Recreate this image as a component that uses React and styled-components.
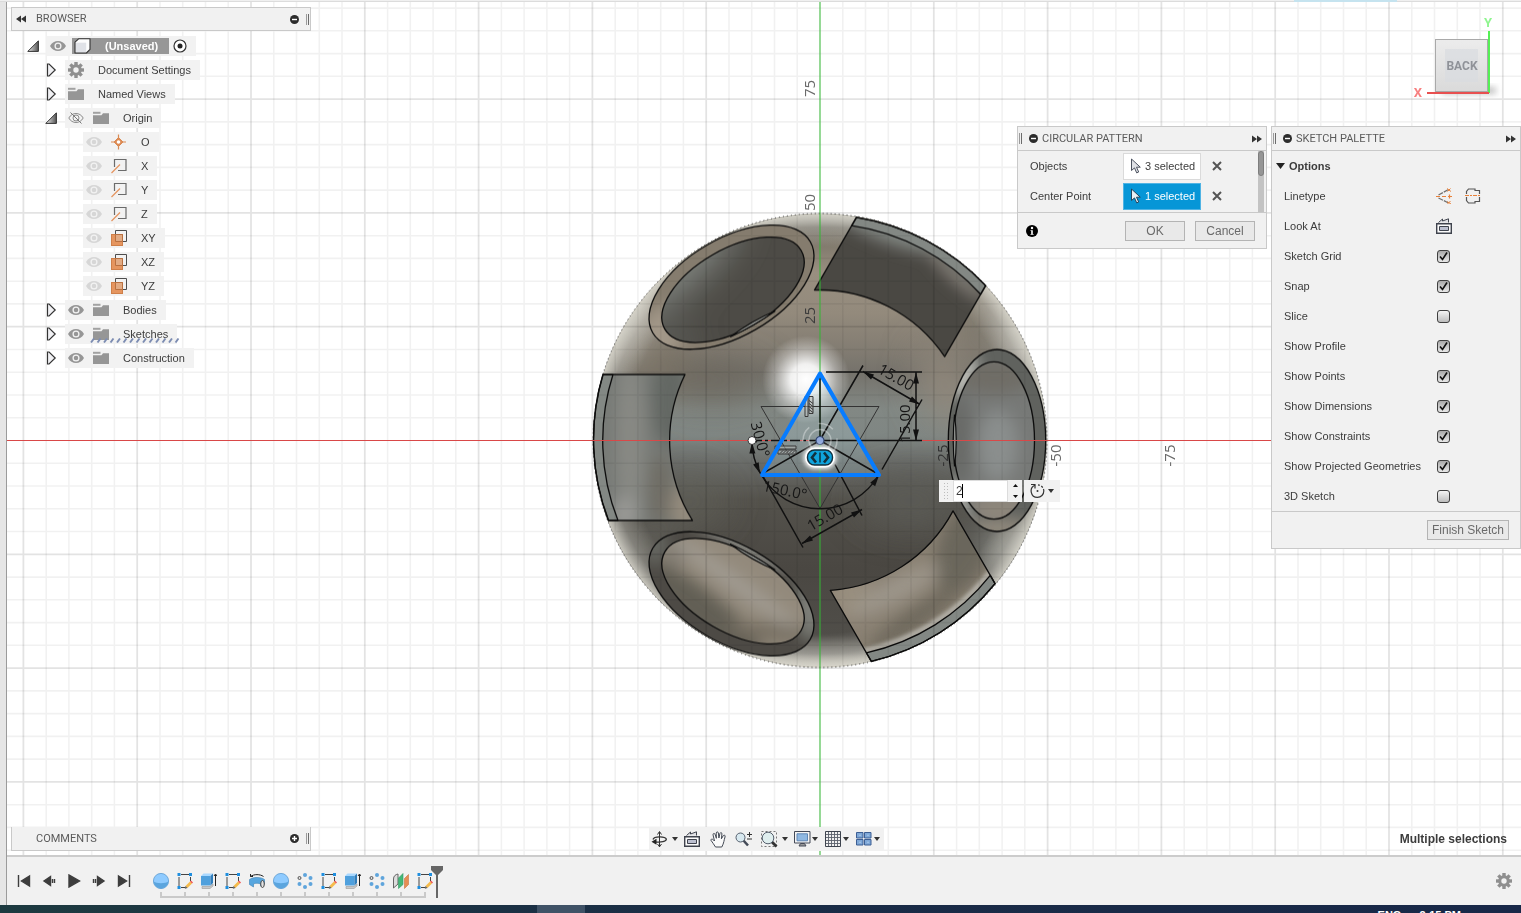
import React, { useState } from "react";
import styled, { createGlobalStyle, css } from "styled-components";

const GlobalStyle = createGlobalStyle`
  * { box-sizing: border-box; }
  body {
    margin: 0;
    font-family: "Liberation Sans", Arial, sans-serif;
    font-size: 11px;
    color: #3c3c3c;
    background: #fff;
  }
  button, input { font-family: inherit; font-size: inherit; color: inherit; }
  svg { display: block; flex: none; }
`;

/* ---------- page frame ---------- */

const Page = styled.div`
  display: flex;
  flex-direction: column;
  height: 100vh;
  overflow: hidden;
`;

const TopStrip = styled.div`
  height: 2px;
  flex: none;
  display: flex;
  justify-content: flex-end;
  padding-right: 124px;
  background: #f0f0f0;
  border-bottom: 1px solid #dcdcdc;
`;

const TopAccent = styled.div`
  width: 103px;
  height: 2px;
  background: #c5e3ef;
`;

const Body = styled.div`
  display: flex;
  flex: 1;
  min-height: 0;
`;

const LeftStrip = styled.div`
  width: 7px;
  flex: none;
  background: #e6e6e6;
  border-right: 1px solid #9b9b9b;
`;

const Main = styled.main`
  flex: 1;
  min-width: 0;
  display: flex;
  flex-direction: column;
`;

const Viewport = styled.section`
  flex: 1;
  min-height: 0;
  display: grid;
  position: relative;
  overflow: hidden;
  background: #fff;
`;

const Scene = styled.svg`
  position: absolute;
  inset: 0;
  width: 100%;
  height: 100%;
`;

const Overlay = styled.div`
  position: relative;
  display: flex;
  flex-direction: column;
  justify-content: space-between;
  padding: 5px 0 4px 4px;
  pointer-events: none;
  & > * { pointer-events: auto; }
`;

const OverlayTop = styled.div`
  display: flex;
  justify-content: space-between;
  align-items: flex-start;
`;

const OverlayBottom = styled.div`
  display: grid;
  grid-template-columns: 1fr auto 1fr;
  align-items: center;
`;

const RightSide = styled.div`
  display: flex;
  flex-direction: column;
  align-items: flex-end;
`;

const PanelRow = styled.div`
  display: flex;
  align-items: flex-start;
  gap: 4px;
`;

/* ---------- panels ---------- */

const Panel = styled.section`
  width: 250px;
  background: #f1f1f1;
  border: 1px solid #c9c9c9;
`;

const PanelHead = styled.header`
  display: flex;
  align-items: center;
  height: 24px;
  padding: 0 4px 0 1px;
  border-bottom: 1px solid #c9c9c9;
`;

const PanelTitle = styled.h2`
  flex: 1;
  margin: 0;
  padding-left: ${(p) => p.$inset || 0}px;
  font: 400 11px/14px Roboto, sans-serif;
  color: #5b5b5b;
`;

const Bar = styled.div`
  display: flex;
  align-items: center;
  width: 300px;
  height: 24px;
  padding: 0 1px 0 4px;
  background: #f1f1f1;
  border: 1px solid #c9c9c9;
  ${(p) => p.$open && css`border-top: 0; padding-left: 24px;`}
`;

const IconButton = styled.button`
  display: grid;
  place-items: center;
  flex: none;
  padding: 0;
  border: 0;
  background: none;
  width: ${(p) => p.$w || 16}px;
  height: ${(p) => p.$h || 16}px;
`;

const Grip = styled.span`
  flex: none;
  width: 3px;
  height: 11px;
  border-left: 1px solid #9a9a9a;
  border-right: 1px solid #6c6c6c;
  margin: 0 ${(p) => p.$after || 0}px 0 ${(p) => p.$before || 0}px;
`;

/* ---------- browser tree ---------- */

const Tree = styled.ul`
  list-style: none;
  margin: 5px 0 0;
  padding: 0 0 0 16px;
`;

const TreeRow = styled.li`
  display: flex;
  align-items: center;
  height: 20px;
  margin-bottom: 4px;
  padding-left: ${(p) => p.$depth * 18}px;
`;

const TwistySlot = styled.span`
  display: flex;
  width: 20px;
  flex: none;
`;

const Chip = styled.div`
  position: relative;
  display: flex;
  align-items: center;
  height: 20px;
  padding: 0 9px 0 3px;
  background: #f2f2f2;
`;

const EyeSlot = styled.span`
  display: flex;
  margin-right: 9px;
`;

const KindSlot = styled.span`
  display: flex;
  margin-right: 14px;
`;

const RootLabel = styled.span`
  display: flex;
  align-items: center;
  height: 16px;
  margin: 0 4px 0 -3px;
  padding: 0 11px 0 2px;
  background: #979797;
  color: #fff;
  font-weight: 700;
`;

const Hatch = styled.svg`
  position: absolute;
  left: 25px;
  bottom: 1px;
`;

/* ---------- forms ---------- */

const FieldRow = styled.div`
  display: flex;
  align-items: center;
  height: 30px;
  padding-left: 12px;
`;

const FieldLabel = styled.label`
  width: ${(p) => p.$w}px;
  flex: none;
`;

const DialogBody = styled.div`
  display: flex;
  justify-content: space-between;
  height: 62px;
  padding-right: 2px;
  border-bottom: 1px solid #c9c9c9;
`;

const ScrollTrack = styled.div`
  width: 6px;
  background: #c3c3c3;
`;

const ScrollThumb = styled.div`
  height: 25px;
  border-radius: 3px;
  border: 1px solid #7e7e7e;
  background: #969696;
`;

const SelectButton = styled.button`
  display: flex;
  align-items: center;
  gap: 4px;
  width: 78px;
  height: 27px;
  padding: 0 0 0 6px;
  border: 1px solid ${(p) => (p.$active ? "#4fb3e4" : "#dadada")};
  background: ${(p) => (p.$active ? "#0696d7" : "#fff")};
  color: ${(p) => (p.$active ? "#fff" : "#3c3c3c")};
  white-space: nowrap;
`;

const DialogFoot = styled.footer`
  display: flex;
  align-items: center;
  gap: 10px;
  height: 35px;
  padding: 0 11px 0 8px;
  justify-content: flex-end;
  & > svg { margin-right: auto; }
`;

const PushButton = styled.button`
  height: 20px;
  min-width: 60px;
  padding: 0 4px;
  border: 1px solid #b4b4b4;
  background: #e9e9e9;
  color: #6a6a6a;
  font-size: 12px;
  line-height: 16px;
`;

const OptionsHead = styled.button`
  display: flex;
  align-items: center;
  gap: 4px;
  height: 30px;
  padding: 0 4px;
  border: 0;
  background: none;
  font-weight: 700;
`;

const CheckWrap = styled.span`
  display: grid;
  place-items: center;
  width: 15px;
  & > * { grid-area: 1 / 1; }
  & > svg { pointer-events: none; }
`;

const Check = styled.input`
  appearance: none;
  width: 13px;
  height: 13px;
  margin: 0;
  border: 1px solid #3f3f3f;
  border-radius: 3px;
  background: ${(p) => (p.checked ? "linear-gradient(#a9a9a9, #e8e8e8)" : "linear-gradient(#f4f4f4, #bdbdbd)")};
`;

const LinetypeIcons = styled.span`
  display: flex;
  gap: 13px;
`;

const PaletteFoot = styled.footer`
  display: flex;
  align-items: center;
  justify-content: flex-end;
  height: 37px;
  padding-right: 11px;
  border-top: 1px solid #c9c9c9;
`;

/* ---------- value editor that floats over the model ---------- */

const ValueEditor = styled.div`
  position: absolute;
  left: calc(50% + 175px);
  top: calc(50% + 51px);
  display: flex;
  gap: 2px;
  height: 22px;
`;

const ValueBox = styled.div`
  display: flex;
  align-items: stretch;
  padding-right: 1px;
  background: #f1f1f1;
`;

const DotGrip = styled.span`
  width: 14px;
  padding: 2px 4px 2px 4px;
  background: radial-gradient(circle, #bdbdbd 1px, transparent 1px) 0 0 / 3px 3px content-box;
  background-clip: content-box;
`;

const ValueField = styled.span`
  position: relative;
  display: flex;
  &::after {
    content: "";
    position: absolute;
    left: 9px;
    top: 4px;
    width: 1px;
    height: 14px;
    background: #000;
  }
`;

const ValueInput = styled.input`
  width: 55px;
  padding: 0 2px;
  border: 1px solid #dcdcdc;
  background: #fff;
  font-size: 12px;
`;

const Spinner = styled.div`
  display: flex;
  flex-direction: column;
  gap: 1px;
  margin-left: 1px;
`;

const ModeButton = styled.button`
  display: flex;
  align-items: center;
  gap: 2px;
  width: 36px;
  padding: 0 0 0 6px;
  border: 0;
  background: #f1f1f1;
`;

/* ---------- bottom ---------- */

const NavBar = styled.div`
  display: flex;
  align-items: center;
  height: 24px;
  padding: 0 4px 0 2px;
  background: #f1f1f1;
`;

const NavButton = styled.button`
  display: flex;
  align-items: center;
  gap: ${(p) => p.$gap || 0}px;
  margin-right: ${(p) => p.$after || 0}px;
  padding: 0;
  border: 0;
  background: none;
`;

const Status = styled.output`
  justify-self: end;
  padding-right: 14px;
  font-size: 12px;
  font-weight: 700;
`;

const Timeline = styled.footer`
  display: flex;
  align-items: center;
  flex: none;
  height: 50px;
  padding: 0 9px;
  background: #f1f1f1;
  border-top: 2px solid #cccccc;
`;

const Playback = styled.div`
  display: flex;
  gap: 9px;
  margin-right: 17px;
`;

const Track = styled.ol`
  display: flex;
  list-style: none;
  margin: 8px 0 0;
  padding: 0;
`;

const Feature = styled.li`
  display: flex;
  flex-direction: column;
  align-items: center;
  width: 24px;
  &::after {
    content: "";
    width: 100%;
    height: 6px;
    margin-top: 3px;
    background:
      linear-gradient(#c9c9c9, #c9c9c9) center top / 2px 100% no-repeat,
      linear-gradient(#c9c9c9, #c9c9c9)
        ${(p) => (p.$edge === "first" ? "right" : "left")} bottom / ${(p) => (p.$edge ? "13px" : "100%")} 2px no-repeat;
  }
`;

const Marker = styled.svg`
  margin: 2px 0 0 -6px;
`;

const Settings = styled(IconButton)`
  margin-left: auto;
`;

const Taskbar = styled.div`
  flex: none;
  display: flex;
  height: 8px;
  overflow: hidden;
  background: linear-gradient(90deg, #1d3a40, #1a2c46 50%, #182848);
  color: #fff;
  font: 700 11px/12px "Liberation Sans", sans-serif;
`;

const TaskSpacer = styled.div`
  flex: ${(p) => p.$grow};
`;

const TaskActive = styled.div`
  width: 48px;
  background: #3f5266;
`;

const Tray = styled.div`
  display: flex;
  gap: 18px;
  padding: 4px 60px 0 0;
`;

/* ---------- icons ---------- */

const DoubleArrow = ({ flip }) => (
  <svg width="11" height="8" viewBox="0 0 11 8" fill="#333">
    <path d={flip ? "M5 0.5v7L0 4zM10 0.5v7L5 4z" : "M1 0.5v7L6 4zM6 0.5v7L11 4z"} />
  </svg>
);

const RoundIcon = ({ plus }) => (
  <svg width="9" height="9" viewBox="0 0 9 9">
    <circle cx="4.5" cy="4.5" r="4.5" fill="#2c2c2c" />
    <path d={plus ? "M2 4.5h5M4.5 2v5" : "M2 4.5h5"} stroke="#fff" strokeWidth="1.4" />
  </svg>
);

const Twisty = ({ open }) =>
  open ? (
    <svg width="12" height="12" viewBox="0 0 12 12">
      <defs>
        <linearGradient id="tw" x1="0" x2="1">
          <stop offset="0" stopColor="#eee" />
          <stop offset="1" stopColor="#555" />
        </linearGradient>
      </defs>
      <path d="M0.8 11.4L11.4 0.8v10.6z" fill="url(#tw)" stroke="#333" />
    </svg>
  ) : (
    <svg width="12" height="14" viewBox="0 0 12 14">
      <path d="M2.5 1v12h1.6L10.2 7 4.1 1z" fill="#f1f1f4" stroke="#333" strokeWidth="1.2" />
    </svg>
  );

const Eye = ({ state = "on" }) => {
  const c = state === "dim" ? "#d6d6d6" : "#969696";
  if (state === "off") {
    return (
      <svg width="16" height="14" viewBox="0 0 16 14" fill="none" stroke="#8c8c8c">
        <path d="M0.8 7C4 1 12 1 15.2 7C12 13 4 13 0.8 7z" />
        <circle cx="8" cy="7" r="3" />
        <path d="M2.5 1.5L13.5 12.5" stroke="#777" />
      </svg>
    );
  }
  return (
    <svg width="16" height="14" viewBox="0 0 16 14">
      <path d="M0 7C3.5 0.4 12.5 0.4 16 7C12.5 13.6 3.5 13.6 0 7z" fill={c} />
      <circle cx="8" cy="7" r="2.9" fill="none" stroke="#f2f2f2" strokeWidth="1.3" />
    </svg>
  );
};

const Gear = ({ color = "#8f8f8f" }) => (
  <svg width="16" height="16" viewBox="-8 -8 16 16" fill={color}>
    {[0, 45, 90, 135].map((a) => (
      <rect key={a} x="-1.7" y="-8" width="3.4" height="16" transform={`rotate(${a})`} />
    ))}
    <circle r="5.8" />
    <circle r="2.7" fill="#f2f2f2" />
  </svg>
);

const Folder = () => (
  <svg width="16" height="14" viewBox="0 0 16 14">
    <path d="M0 4.2h8.500l1.500-2h6V13H0z" fill="#969696" />
    <path d="M0 0.800h7.500v2H0z" fill="#a2a2a2" />
  </svg>
);

const Cube = () => (
  <svg width="17" height="16" viewBox="0 0 17 16" strokeLinejoin="round">
    <path d="M1 4.2L4.6 0.8H16v10.600L12.400 15H1z" fill="#fdfdfd" />
    <path d="M1.500 4.700H12.200V14.700H1.500z" fill="#e0e2e7" />
    <path d="M1 4.2L4.6 0.8H16v10.600L12.400 15H1z" fill="none" stroke="#333" strokeWidth="1.100" />
  </svg>
);

const OriginIcon = () => (
  <svg width="16" height="16" viewBox="0 0 16 16" stroke="#d98a54">
    <path d="M7.500 0.500v15M0 8h15" strokeWidth="1.200" />
    <path d="M7.500 3.500L12 8l-4.500 4.500L3 8z" fill="#dd8b55" />
    <circle cx="7.500" cy="8" r="1.800" fill="#fff" stroke="none" />
  </svg>
);

const AxisIcon = () => (
  <svg width="16" height="16" viewBox="0 0 16 16" fill="none">
    <path d="M3.500 9V1.500H15V12.500H7" stroke="#6b6b6b" strokeWidth="1.200" />
    <path d="M0.500 15L9 6.500" stroke="#e59560" strokeWidth="1.300" />
  </svg>
);

const PlaneIcon = () => (
  <svg width="16" height="16" viewBox="0 0 16 16">
    <path d="M4.500 4V0.500H15.500V11.500H12" fill="none" stroke="#4d4d4d" />
    <rect x="0.500" y="4.500" width="11" height="11" fill="#e5955f" stroke="#cf7f49" />
    <path d="M4.500 4.500h7v7h-7z" fill="#e2ab84" stroke="#b97040" />
  </svg>
);

const Cursor = ({ active }) => (
  <svg width="11" height="16" viewBox="0 0 11 16">
    <path d="M1.500 1v11.500l3-2.600 2.200 5 2-0.900-2.200-4.800h3.800z" fill={active ? "#e9f0f5" : "#dfe1e6"} stroke={active ? "#25455c" : "#4d5360"} />
  </svg>
);

const Cross = () => (
  <svg width="10" height="10" viewBox="0 0 10 10">
    <path d="M1 1l8 8M9 1L1 9" stroke="#555" strokeWidth="2" />
  </svg>
);

const Info = () => (
  <svg width="12" height="12" viewBox="0 0 12 12">
    <circle cx="6" cy="6" r="6" fill="#000" />
    <circle cx="6" cy="3" r="1.200" fill="#fff" />
    <path d="M4.500 5.200H6.800V9H7.600V9.800H4.500V9H5.200V6H4.500z" fill="#fff" />
  </svg>
);

const Caret = () => (
  <svg width="6" height="4" viewBox="0 0 6 4">
    <path d="M0 0h6L3 4z" fill="#333" />
  </svg>
);

const LookAt = () => (
  <svg width="16" height="16" viewBox="0 0 16 16" fill="none" stroke="#3f434d">
    <path d="M0.700 5.700h14.600v9.600H0.700z" fill="#fbfbfb" strokeWidth="1.400" />
    <path d="M3.500 8.500h9v4h-9z" fill="#bcc0d0" />
    <path d="M2.500 4.500L6.500 1V3L12.500 0.800V4.500" fill="#dfe0e4" />
  </svg>
);

const LineConstruct = () => (
  <svg width="16" height="16" viewBox="0 0 16 16" fill="none">
    <path d="M0 8.500h4M6 8.500h4M12 8.500h4M13.500 6.500v4" stroke="#e8813a" strokeWidth="1.200" />
    <path d="M2.500 7L12 1.800M2.500 10L12 14.700" stroke="#6f6f6f" strokeWidth="1.200" strokeDasharray="5 1" />
    <path d="M11 0.500l4 3M14.500 0.500l-3 3M11 13.500l4 2.500M14.500 13l-3 3" stroke="#e8813a" />
  </svg>
);

const LineCenter = () => (
  <svg width="16" height="16" viewBox="0 0 16 16" fill="none">
    <path d="M1.500 6V3.500L3.500 1H10V2.500H14.500V6M1.500 9V12.500L3.500 15H10V13.500H14.500V9" stroke="#555" strokeWidth="1.200" />
    <path d="M0 7.500h16" stroke="#e8813a" strokeWidth="1.200" strokeDasharray="4 1 2 1" />
  </svg>
);

const Orbit = () => (
  <svg width="16" height="16" viewBox="0 0 16 16" fill="none" stroke="#333">
    <path d="M8.500 1v15M6.500 3.500L8.500 0.500l2 3M6.500 13l2 2.800 2-2.800" />
    <path d="M2 8.500C3 5 14 5 15.300 8C15.500 10.500 10 11.500 4 10.800" strokeWidth="1.300" />
    <path d="M0.500 10.800l5-3v6z" fill="#222" stroke="none" />
  </svg>
);

const Hand = () => (
  <svg width="17" height="17" viewBox="0 0 17 17">
    <path
      d="M5.500 16C4 13.500 2.500 11.500 0.900 9.200C1 7.500 2.800 7.800 4.500 10L3 3.800C3 2 4.700 2 5.200 3.600L6.400 7.300L6.200 2C6.600 0.500 8 0.500 8.400 2L8.900 7L10 2.300C10.700 1 12 1.500 11.900 3L11.400 7.800L13.300 4.600C14.500 3.500 15.500 4.500 15 6C14 9 14 12 11.800 16z"
      fill="#fafafa"
      stroke="#444a55"
    />
  </svg>
);

const ZoomIcon = () => (
  <svg width="18" height="16" viewBox="0 0 18 16">
    <path d="M8 9L13 14.500" stroke="#434a57" strokeWidth="2.600" />
    <circle cx="5.500" cy="6.500" r="4.500" fill="#d8e9f0" stroke="#56606e" />
    <path d="M12 3.500h5M14.500 1v5M12 8h5" stroke="#333" />
  </svg>
);

const FitIcon = () => (
  <svg width="17" height="17" viewBox="0 0 17 17">
    <path d="M0.500 0.500h15v15h-15z" fill="none" stroke="#777" strokeDasharray="2 2" />
    <path d="M10.500 10.500L15.500 15.500" stroke="#333" strokeWidth="2.800" />
    <circle cx="7" cy="7" r="5.800" fill="#dfeeee" stroke="#56606e" />
  </svg>
);

const Monitor = () => (
  <svg width="17" height="16" viewBox="0 0 17 16" stroke="#444a58">
    <path d="M0.500 0.500h15.500v11.500H0.500z" fill="#f4f4f4" />
    <path d="M3 2.800h10.500v7H3z" fill="#8fb8e2" stroke="#5e86b5" />
    <path d="M6.500 12.500h4l1.500 2.500h-7z" fill="#999" />
  </svg>
);

const GridIcon = () => (
  <svg width="16" height="16" viewBox="0 0 16 16" fill="none" stroke="#5a606b">
    <path d="M3.500 0v16M6.500 0v16M9.500 0v16M12.500 0v16M0 3.500h16M0 6.500h16M0 9.500h16M0 12.500h16" strokeWidth="0.900" />
    <path d="M0.500 0.500h15v15h-15z" stroke="#3d434e" />
  </svg>
);

const Panes = () => (
  <svg width="16" height="14" viewBox="0 0 16 14" fill="#7fa8d8" stroke="#3d5f94">
    <path d="M0.500 0.500h6.500v5.500H0.500zM8.500 0.500H15v5.500H8.500zM0.500 7.500h6.500v5.500H0.500zM8.500 7.500H15v5.500H8.500z" />
    <path d="M3 2.800h2v1H3zM11 2.800h2v1h-2zM3 9.800h2v1H3zM11 9.800h2v1h-2z" fill="#a9c6e8" stroke="none" />
  </svg>
);

const Rotate = () => (
  <svg width="16" height="16" viewBox="0 0 16 16" fill="none" stroke="#333" strokeWidth="1.200">
    <path d="M1 1.500H5V5.500" />
    <path d="M5 2.200A6.300 6.300 0 0 0 7.500 14.300A6.300 6.300 0 0 0 13.800 8" />
    <path d="M8 1.800A6.300 6.300 0 0 1 13.800 8" strokeDasharray="2 1.500" />
    <circle cx="7.500" cy="8" r="1" fill="#333" stroke="none" />
  </svg>
);

const PLAY = {
  "Go to start": "M1.500 1v12M12.500 2v10L4.500 7z",
  "Step back": "M8.500 2.500v9L2 7z M10.500 5v4M12.500 5v4",
  Play: "M2 1v12L12.500 7z",
  "Step forward": "M5.500 2.500v9L12 7z M1.500 5v4M3.500 5v4",
  "Go to end": "M12.500 1v12M1.500 2v10L9.500 7z",
};

const FeatureIcon = ({ kind }) => {
  switch (kind) {
    case "sphere":
      return (
        <svg width="16" height="16" viewBox="0 0 16 16">
          <circle cx="8" cy="8" r="7.600" fill="#8fcbff" stroke="#5a9bd0" strokeWidth="0.800" />
          <path d="M0.800 8.500C3 10.800 13 10.800 15.200 8.500C15 17.500 1 17.500 0.800 8.500z" fill="#5ba5de" />
        </svg>
      );
    case "sketch":
      return (
        <svg width="16" height="16" viewBox="0 0 16 16">
          <path d="M2 4v9M13.500 4v4M4 1.500h8M4 14.500h4" stroke="#444" fill="none" />
          <path d="M0.500 0h3v3h-3zM12 0h3v3h-3zM0.500 13h3v3h-3z" fill="#1f8fe0" />
          <path d="M8.500 13L13 8.500l2 2-4.500 4.500z" fill="#f5bb4b" />
          <path d="M13 8.500l1-1 2 2-1 1z" fill="#f14f4f" />
          <path d="M8.500 13l2 2-2.700 0.700z" fill="#555" />
        </svg>
      );
    case "extrude":
      return (
        <svg width="16" height="16" viewBox="0 0 16 16">
          <path d="M1 13.500h8l3-2.500v2l-3 2.500H1z" fill="#c9c9c9" stroke="#999" strokeWidth="0.600" />
          <path d="M0 3L2.500 0.500h9.500L9.500 3z" fill="#a9d8ff" />
          <path d="M0 3h9.500v9.500H0z" fill="#4fa0dd" />
          <path d="M9.500 3L12 0.500v9.500L9.500 12.500z" fill="#2f7dbb" />
          <path d="M14.500 13V1.500M13 3L14.500 1l1.500 2" stroke="#222" fill="none" />
        </svg>
      );
    case "revolve":
      return (
        <svg width="16" height="16" viewBox="0 0 16 16">
          <path d="M1.500 3.500C5 1 11 1 14.500 3.500M1.500 1v2.500H4" stroke="#222" fill="none" />
          <path d="M0.500 6.500C4 3.800 12 3.800 15.500 6.500V11L11.500 13V11C10 10 6 10 4.500 11V14L0.500 11.500z" fill="#57a6df" stroke="#3a81b5" strokeWidth="0.600" />
          <ellipse cx="13.500" cy="11" rx="1.800" ry="3.500" fill="#e3e3e3" stroke="#444" />
        </svg>
      );
    case "pattern":
      return (
        <svg width="16" height="16" viewBox="0 0 16 16" fill="#5fa5dc">
          <circle cx="8" cy="2" r="2" />
          <circle cx="13.500" cy="5" r="2" />
          <circle cx="13.500" cy="11" r="2" />
          <circle cx="8" cy="14" r="2" />
          <circle cx="2.500" cy="11" r="2" />
          <circle cx="2.500" cy="5" r="1.500" fill="#ddd" stroke="#555" />
        </svg>
      );
    default:
      return (
        <svg width="16" height="16" viewBox="0 0 16 16">
          <path d="M0.500 15V6C0.500 3 2.500 1.500 5 1v10z" fill="#ddd" stroke="#666" />
          <path d="M5.500 5L10 0.500v11L5.500 15.500z" fill="#43b878" stroke="#339962" strokeWidth="0.600" />
          <path d="M11.500 5.500L15.500 1.500v10l-4 4z" fill="#e68d55" stroke="#c9743e" strokeWidth="0.600" />
        </svg>
      );
  }
};

/* ---------- model scene ---------- */

const SLOT = "M-217 -66L-135 -66A150.500 150.500 0 0 0 -127.500 80L-211.500 80A227 227 0 0 1 -217 -66Z";
const SLOT_RIM = "M-217 -66L-207 -66A217 217 0 0 0 -202 80L-211.500 80A227 227 0 0 1 -217 -66Z";
const STEP = 22.76;

const gridPath = (major) => {
  let d = "";
  for (let i = -60; i <= 60; i++) {
    if (i === 0 || (i % 5 === 0) !== major) continue;
    const p = (i * STEP).toFixed(1);
    d += `M${p} -900V900M-1500 ${p}H1500`;
  }
  return d;
};

const Blob = ({ x, y, rx, ry = rx, c, o = 1, a = 0 }) => (
  <ellipse rx={rx} ry={ry} fill={c} opacity={o} transform={`translate(${x} ${y}) rotate(${a})`} />
);

const Dim = ({ x, y, a, children, c = "#161616" }) => (
  <text transform={`translate(${x} ${y}) rotate(${a})`} textAnchor="middle" dy="5" fontSize="15" fill={c} fontFamily="'Open Sans', sans-serif">
    {children}
  </text>
);

const Arrow = ({ x, y, a }) => <path d="M0 0L-11 -3V3z" fill="#111" stroke="none" transform={`translate(${x} ${y}) rotate(${a})`} />;

const Hole = ({ id, a, ring, children }) => (
  <g>
    <clipPath id={`${id}r`}>
      <ellipse cx="177" rx="48.700" ry="91" transform={`rotate(${a})`} />
    </clipPath>
    <clipPath id={`${id}h`}>
      <ellipse cx="174" rx="40.500" ry="78.700" transform={`rotate(${a})`} />
    </clipPath>
    <g clipPath={`url(#${id}r)`}>{ring}</g>
    <g clipPath={`url(#${id}h)`}>{children}</g>
    <g transform={`rotate(${a})`} fill="none" stroke="#0c0c0c" strokeWidth="1.300">
      <ellipse cx="177" rx="48.700" ry="91" />
      <ellipse cx="174" rx="40.500" ry="78.700" />
      <path d="M134.500 -26Q138 0 134.500 26Q132 0 134.500 -26Z" fill="#8c8e8a" strokeWidth="1.100" />
    </g>
  </g>
);

const Slot = ({ id, a, children }) => (
  <g>
    <clipPath id={id}>
      <path d={SLOT} transform={`rotate(${a})`} />
    </clipPath>
    <g clipPath={`url(#${id})`}>{children}</g>
    <g transform={`rotate(${a})`} stroke="#0c0c0c" strokeWidth="1.300" strokeLinejoin="round">
      <path d={SLOT_RIM} fill="#838884" />
      <path d={SLOT} fill="none" />
    </g>
  </g>
);

const ModelScene = () => (
  <Scene viewBox="7 2 1514 853" preserveAspectRatio="xMidYMid slice" role="img" aria-label="Sketch on a spherical body">
    <defs>
      <linearGradient id="base" gradientUnits="userSpaceOnUse" x1="0" x2="0" y1="-227" y2="227">
        <stop offset="0" stopColor="#a3a29a" />
        <stop offset="0.030" stopColor="#77736a" />
        <stop offset="0.070" stopColor="#817a6d" />
        <stop offset="0.130" stopColor="#998f80" />
        <stop offset="0.220" stopColor="#938a7c" />
        <stop offset="0.300" stopColor="#827c72" />
        <stop offset="0.350" stopColor="#75726b" />
        <stop offset="0.430" stopColor="#828884" />
        <stop offset="0.490" stopColor="#7f8683" />
        <stop offset="0.550" stopColor="#6a6c69" />
        <stop offset="0.630" stopColor="#54524c" />
        <stop offset="0.780" stopColor="#4a4742" />
        <stop offset="0.930" stopColor="#504e49" />
        <stop offset="0.970" stopColor="#7c7a74" />
        <stop offset="1" stopColor="#cdc9bc" />
      </linearGradient>
      <radialGradient id="rim" gradientUnits="userSpaceOnUse" cx="0" cy="0" r="227">
        <stop offset="0.850" stopColor="#d4d3ca" stopOpacity="0" />
        <stop offset="0.940" stopColor="#d0cfc7" stopOpacity="0.350" />
        <stop offset="1" stopColor="#d8d6cc" stopOpacity="0.900" />
      </radialGradient>
      <radialGradient id="shine">
        <stop offset="0" stopColor="#fff" />
        <stop offset="0.350" stopColor="#fff" stopOpacity="0.900" />
        <stop offset="0.700" stopColor="#fff" stopOpacity="0.350" />
        <stop offset="1" stopColor="#fff" stopOpacity="0" />
      </radialGradient>
      <filter id="b8" x="-50%" y="-50%" width="200%" height="200%">
        <feGaussianBlur stdDeviation="8" />
      </filter>
      <filter id="b18" x="-60%" y="-60%" width="220%" height="220%">
        <feGaussianBlur stdDeviation="18" />
      </filter>
      <filter id="b2" x="-50%" y="-50%" width="200%" height="200%">
        <feGaussianBlur stdDeviation="2" />
      </filter>
      <clipPath id="ball">
        <circle r="227" />
      </clipPath>
    </defs>

    <g transform="translate(820 440.500)">
      <g clipPath="url(#ball)">
        <circle r="227" fill="url(#base)" />
        <g filter="url(#b18)">
          <Blob x={-165} y={-75} rx={35} ry={30} c="#7d7465" o={0.8} />
          <Blob x={-105} y={-60} rx={50} ry={22} c="#6a665c" o={0.8} />
          <Blob x={-130} y={60} rx={40} ry={30} c="#63625c" o={0.6} />
          <Blob x={-175} y={105} rx={25} ry={22} c="#66655f" />
          <Blob x={125} y={-55} rx={24} ry={42} c="#91887b" a={-20} />
          <Blob x={165} y={-115} rx={18} ry={36} c="#756f65" a={-30} />
          <Blob x={178} y={110} rx={30} ry={26} c="#787a76" />
          <Blob x={90} y={60} rx={50} ry={26} c="#5b5b57" />
          <Blob x={-196} y={-125} rx={16} ry={44} c="#d0cfc8" a={30} />
          <Blob x={208} y={-100} rx={12} ry={44} c="#d0cfc8" a={-28} />
          <Blob x={205} y={100} rx={12} ry={34} c="#bdbcb2" a={28} />
        </g>
        <circle r="227" fill="url(#rim)" />
        <circle cx="-14" cy="-61" r="44" fill="url(#shine)" />
      </g>
      <circle r="227" fill="none" stroke="#222" strokeDasharray="1 3" strokeWidth="1" />

      <Hole
        id="tl"
        a={240}
        ring={
          <g>
            <rect x="-180" y="-220" width="190" height="140" fill="#857c6e" />
            <g filter="url(#b8)">
              <Blob x={-160} y={-105} rx={22} ry={35} c="#a29788" a={30} />
              <Blob x={-60} y={-80} rx={50} ry={14} c="#8e8a82" a={-30} />
            </g>
          </g>
        }
      >
        <rect x="-180" y="-220" width="190" height="140" fill="#4d4b46" />
        <g filter="url(#b18)">
          <Blob x={-140} y={-175} rx={75} ry={22} c="#858a85" a={-42} />
          <Blob x={-150} y={-95} rx={20} ry={20} c="#5f605b" />
        </g>
      </Hole>

      <Hole
        id="bl"
        a={120}
        ring={
          <g>
            <rect x="-180" y="80" width="190" height="140" fill="#4d4a45" />
            <g filter="url(#b8)">
              <Blob x={-80} y={96} rx={80} ry={10} c="#a0a19b" a={28} />
              <Blob x={-10} y={165} rx={12} ry={36} c="#83857f" />
              <Blob x={-165} y={105} rx={12} ry={20} c="#686964" />
            </g>
          </g>
        }
      >
        <rect x="-180" y="80" width="190" height="140" fill="#938a7c" />
        <g filter="url(#b8)">
          <Blob x={-122} y={168} rx={80} ry={20} c="#625e54" a={38} />
          <Blob x={-145} y={110} rx={12} ry={16} c="#827d73" />
          <Blob x={-85} y={142} rx={80} ry={7} c="#a39e95" a={36} />
          <Blob x={-45} y={192} rx={50} ry={8} c="#746d60" a={5} />
        </g>
      </Hole>

      <Hole
        id="rt"
        a={0}
        ring={
          <g>
            <rect x="120" y="-95" width="110" height="190" fill="#60625e" />
            <g filter="url(#b8)">
              <Blob x={142} y={-65} rx={14} ry={24} c="#bdbdb7" a={20} />
              <Blob x={178} y={88} rx={36} ry={10} c="#958d80" />
              <Blob x={138} y={62} rx={10} ry={26} c="#b7b8b3" />
            </g>
          </g>
        }
      >
        <rect x="120" y="-95" width="110" height="190" fill="#777977" />
        <g filter="url(#b8)">
          <Blob x={175} y={-65} rx={40} ry={18} c="#6f6d66" />
          <Blob x={178} y={5} rx={20} ry={36} c="#8a8e8d" />
          <Blob x={140} y={0} rx={10} ry={50} c="#666865" />
          <Blob x={180} y={68} rx={30} ry={18} c="#8d867b" />
        </g>
      </Hole>

      <Slot id="sl" a={0}>
        <rect x="-230" y="-70" width="110" height="155" fill="#777a76" />
        <g filter="url(#b8)">
          <Blob x={-190} y={0} rx={14} ry={90} c="#888984" />
          <Blob x={-150} y={-40} rx={18} ry={46} c="#646763" />
          <Blob x={-160} y={50} rx={12} ry={36} c="#706d65" />
          <Blob x={-135} y={68} rx={14} ry={26} c="#958c7e" />
          <Blob x={-195} y={75} rx={14} ry={20} c="#999995" />
        </g>
      </Slot>

      <Slot id="su" a={120}>
        <rect x="-10" y="-230" width="190" height="150" fill="#4a4843" />
        <g filter="url(#b8)">
          <Blob x={70} y={-211} rx={60} ry={13} c="#858a86" a={20} />
          <Blob x={138} y={-166} rx={40} ry={8} c="#85817a" a={42} />
        </g>
      </Slot>

      <Slot id="sd" a={240}>
        <rect x="0" y="60" width="190" height="170" fill="#8a8173" />
        <g filter="url(#b8)">
          <Blob x={145} y={105} rx={26} ry={50} c="#6b665b" a={20} />
          <Blob x={30} y={150} rx={20} ry={30} c="#978d7e" />
          <Blob x={75} y={150} rx={50} ry={12} c="#9c958a" a={-28} />
          <Blob x={95} y={178} rx={60} ry={10} c="#6d675b" a={-35} />
        </g>
        <circle r="215" fill="none" stroke="#d2d2cd" strokeWidth="4" filter="url(#b2)" opacity="0.800" />
      </Slot>

      <path d={gridPath(false)} stroke="#000" strokeOpacity="0.055" strokeWidth="1.600" />
      <path d={gridPath(true)} stroke="#000" strokeOpacity="0.110" strokeWidth="1.800" />
      <path d="M-813 0H452" stroke="#d94848" strokeWidth="1.200" />
      <path d="M0 -439V415" stroke="#35b535" strokeOpacity="0.800" strokeWidth="1.300" />

      <g>
        <Dim x={-10} y={-352} a={-90} c="#6a6a6a">75</Dim>
        <Dim x={-10} y={-238} a={-90} c="#6a6a6a">50</Dim>
        <Dim x={-10} y={-125} a={-90} c="#3c3c3c">25</Dim>
        <Dim x={123} y={15} a={-90} c="#333">-25</Dim>
        <Dim x={236} y={15} a={-90} c="#6a6a6a">-50</Dim>
        <Dim x={350} y={15} a={-90} c="#6a6a6a">-75</Dim>
      </g>

      <path d="M0 -67L59 35H-58Z" fill="#bcdfea" fillOpacity="0.220" />
      <g fill="none" stroke="#111" strokeWidth="1.500">
        <path d="M-59 -34H59L0 68Z" stroke="#333" strokeWidth="1" />
        <path d="M0 0V-64M0 0L59 34M0 0L-59 34" />
        <path d="M6 -68.500H102M0 0H102M96 -68V0M43 -75L2 -4M102 -41L62 29M43 -69L100 -36" />
        <path d="M-58 34L-17 107M15 24L42 75M-18 103L42 69" />
        <path d="M-68 0A68 68 0 0 0 -59 34A68 68 0 0 0 59 34" />
        <path d="M-68 0H0" strokeDasharray="10 3 3 3" />
        <Arrow x={96} y={-68} a={-90} />
        <Arrow x={96} y={0} a={90} />
        <Arrow x={43} y={-69} a={210} />
        <Arrow x={100} y={-36} a={30} />
        <Arrow x={-18} y={103} a={150} />
        <Arrow x={42} y={69} a={-30} />
        <Arrow x={-68} y={2} a={-92} />
        <Arrow x={-60} y={33} a={68} />
        <Arrow x={59} y={35} a={-55} />
      </g>
      <Dim x={76} y={-63} a={30}>15.00</Dim>
      <Dim x={85} y={-17} a={-90}>15.00</Dim>
      <Dim x={5} y={77} a={-30}>15.00</Dim>
      <Dim x={-60} y={-1} a={75}>30.0°</Dim>
      <Dim x={-35} y={50} a={12}>150.0°</Dim>
      <g fill="none" stroke="#fff" strokeOpacity="0.350" strokeWidth="1.500">
        <circle r="11" />
        <circle r="17" strokeDasharray="16 10" />
      </g>
      <g fill="#b9bcba" fillOpacity="0.500" stroke="#3a3a3a">
        <path d="M-45 5.500H-24V8.500H-45Z" />
        <path d="M-42 9.500H-24V13.500H-42ZM-40 13l3 -3m0 3l3 -3m0 3l3 -3m0 3l3 -3m0 3l3 -3" />
        <path d="M-15 -44H-12V-24H-15Z" />
        <path d="M-11 -44H-7V-27H-11ZM-11 -40l4 3m-4 0l4 3m-4 0l4 3m-4 0l4 3" />
      </g>
      <path d="M0 -67L59 34.500H-58Z" fill="none" stroke="#077cff" strokeWidth="4" strokeLinejoin="round" />
      <circle cx="-68" r="4" fill="#fff" stroke="#333" />
      <circle r="4" fill="#8fa8dc" stroke="#30436d" strokeWidth="1.200" />
      <rect x="-15" y="7" width="30" height="20" rx="10" fill="#fff" stroke="#fff" strokeWidth="3" opacity="0.900" filter="url(#b2)" />
      <rect x="-15" y="7" width="30" height="20" rx="10" fill="#fff" />
      <rect x="-12.500" y="9.500" width="25" height="15" rx="7" fill="#0fa3dc" stroke="#12303e" strokeWidth="1.400" />
      <path d="M-4 12L-8 17l4 5M4 12l4 5-4 5" fill="none" stroke="#12303e" strokeWidth="2.600" />
      <path d="M0 12v10" stroke="#12303e" strokeWidth="1.500" />
    </g>
  </Scene>
);

const ViewCube = () => (
  <svg width="111" height="119" viewBox="1410 7 111 119" role="img" aria-label="View cube: back">
    <defs>
      <linearGradient id="vc" x1="0" x2="0" y1="0" y2="1">
        <stop offset="0" stopColor="#ececec" />
        <stop offset="1" stopColor="#dadada" />
      </linearGradient>
      <filter id="vs" x="-20%" y="-50%" width="140%" height="200%">
        <feGaussianBlur stdDeviation="3" />
      </filter>
    </defs>
    <rect x="1442" y="87" width="54" height="7" fill="#777" opacity="0.450" filter="url(#vs)" />
    <rect x="1435.500" y="39.500" width="52" height="52" fill="url(#vc)" stroke="#a9a9a9" />
    <rect x="1445" y="49" width="33" height="33" fill="#d9dbdf" opacity="0.700" />
    <text x="1462" y="70" textAnchor="middle" fontFamily="Roboto, sans-serif" fontWeight="700" fontSize="12" fill="#8f9298">
      BACK
    </text>
    <path d="M1489 31V93" stroke="#55f055" strokeWidth="2" />
    <path d="M1427 93H1489" stroke="#e85050" strokeWidth="2" />
    <g fontFamily="Roboto, sans-serif" fontWeight="700" fontSize="13" textAnchor="middle">
      <text x="1488" y="27" fill="#90f590">Y</text>
      <text x="1418" y="97" fill="#f78080">X</text>
    </g>
  </svg>
);

/* ---------- data ---------- */

const TREE = [
  { depth: 1, open: false, kind: "gear", label: "Document Settings" },
  { depth: 1, open: false, kind: "folder", label: "Named Views" },
  { depth: 1, open: true, eye: "off", kind: "folder", label: "Origin" },
  { depth: 2, eye: "dim", kind: "origin", label: "O" },
  { depth: 2, eye: "dim", kind: "axis", label: "X" },
  { depth: 2, eye: "dim", kind: "axis", label: "Y" },
  { depth: 2, eye: "dim", kind: "axis", label: "Z" },
  { depth: 2, eye: "dim", kind: "plane", label: "XY" },
  { depth: 2, eye: "dim", kind: "plane", label: "XZ" },
  { depth: 2, eye: "dim", kind: "plane", label: "YZ" },
  { depth: 1, open: false, eye: "on", kind: "folder", label: "Bodies" },
  { depth: 1, open: false, eye: "on", kind: "folder", label: "Sketches", hatch: true },
  { depth: 1, open: false, eye: "on", kind: "folder", label: "Construction" },
];

const KINDS = { gear: Gear, folder: Folder, origin: OriginIcon, axis: AxisIcon, plane: PlaneIcon };

const OPTIONS = [
  ["Sketch Grid", true],
  ["Snap", true],
  ["Slice", false],
  ["Show Profile", true],
  ["Show Points", true],
  ["Show Dimensions", true],
  ["Show Constraints", true],
  ["Show Projected Geometries", true],
  ["3D Sketch", false],
];

const FEATURES = ["sphere", "sketch", "extrude", "sketch", "revolve", "sphere", "pattern", "sketch", "extrude", "pattern", "mirror", "sketch"];

/* ---------- sections ---------- */

const Browser = () => (
  <nav aria-label="Browser">
    <Bar>
      <IconButton aria-label="Collapse browser" $w={11}><DoubleArrow flip /></IconButton>
      <PanelTitle $inset={9}>BROWSER</PanelTitle>
      <IconButton aria-label="Minimize"><RoundIcon /></IconButton>
      <Grip $before={4} />
    </Bar>
    <Tree>
      <TreeRow $depth={0}>
        <TwistySlot><Twisty open /></TwistySlot>
        <Chip>
          <EyeSlot><Eye /></EyeSlot>
          <RootLabel>
            <KindSlot><Cube /></KindSlot>
            (Unsaved)
          </RootLabel>
          <svg width="14" height="14" viewBox="0 0 14 14">
            <circle cx="7" cy="7" r="6" fill="#fff" stroke="#333" strokeWidth="1.200" />
            <circle cx="7" cy="7" r="2.500" fill="#222" />
          </svg>
        </Chip>
      </TreeRow>
      {TREE.map((n) => {
        const Kind = KINDS[n.kind];
        return (
          <TreeRow key={n.label} $depth={n.depth}>
            <TwistySlot>{n.open !== undefined && <Twisty open={n.open} />}</TwistySlot>
            <Chip>
              {n.eye && <EyeSlot><Eye state={n.eye} /></EyeSlot>}
              <KindSlot><Kind /></KindSlot>
              {n.label}
              {n.hatch && (
                <Hatch width="90" height="5" viewBox="0 0 90 5">
                  {Array.from({ length: 14 }, (_, i) => (
                    <path key={i} d={`M${i * 6.5 + 1} 4.500l3-4`} stroke="#7c8cb2" strokeWidth="1.900" />
                  ))}
                </Hatch>
              )}
            </Chip>
          </TreeRow>
        );
      })}
    </Tree>
  </nav>
);

const CircularPattern = () => (
  <Panel>
    <PanelHead>
      <Grip $after={7} />
      <IconButton aria-label="Minimize" $w={9}><RoundIcon /></IconButton>
      <PanelTitle $inset={4}>CIRCULAR PATTERN</PanelTitle>
      <IconButton aria-label="Expand" $w={11}><DoubleArrow /></IconButton>
    </PanelHead>
    <DialogBody>
      <div>
        <FieldRow>
          <FieldLabel htmlFor="objects" $w={93}>Objects</FieldLabel>
          <SelectButton id="objects"><Cursor />3 selected</SelectButton>
          <IconButton aria-label="Clear objects" $w={32}><Cross /></IconButton>
        </FieldRow>
        <FieldRow>
          <FieldLabel htmlFor="center" $w={93}>Center Point</FieldLabel>
          <SelectButton id="center" $active><Cursor active />1 selected</SelectButton>
          <IconButton aria-label="Clear center point" $w={32}><Cross /></IconButton>
        </FieldRow>
      </div>
      <ScrollTrack><ScrollThumb /></ScrollTrack>
    </DialogBody>
    <DialogFoot>
      <Info />
      <PushButton>OK</PushButton>
      <PushButton>Cancel</PushButton>
    </DialogFoot>
  </Panel>
);

const SketchPalette = () => {
  const [values, setValues] = useState(() => Object.fromEntries(OPTIONS));
  return (
    <Panel>
      <PanelHead>
        <Grip $after={7} />
        <IconButton aria-label="Minimize" $w={9}><RoundIcon /></IconButton>
        <PanelTitle $inset={4}>SKETCH PALETTE</PanelTitle>
        <IconButton aria-label="Expand" $w={11}><DoubleArrow /></IconButton>
      </PanelHead>
      <OptionsHead>
        <svg width="9" height="6" viewBox="0 0 9 6"><path d="M0 0h9L4.500 6z" fill="#222" /></svg>
        Options
      </OptionsHead>
      <FieldRow>
        <FieldLabel as="span" $w={152}>Linetype</FieldLabel>
        <LinetypeIcons>
          <IconButton aria-label="Construction"><LineConstruct /></IconButton>
          <IconButton aria-label="Centerline"><LineCenter /></IconButton>
        </LinetypeIcons>
      </FieldRow>
      <FieldRow>
        <FieldLabel htmlFor="lookat" $w={152}>Look At</FieldLabel>
        <IconButton id="lookat"><LookAt /></IconButton>
      </FieldRow>
      {OPTIONS.map(([label], i) => (
        <FieldRow key={label}>
          <FieldLabel htmlFor={`opt${i}`} $w={152}>{label}</FieldLabel>
          <CheckWrap>
            <Check
              id={`opt${i}`}
              type="checkbox"
              checked={values[label]}
              onChange={(e) => setValues({ ...values, [label]: e.target.checked })}
            />
            {values[label] && (
              <svg width="11" height="11" viewBox="0 0 11 11">
                <path d="M2 5.500L4.500 8.500L9 1.500" fill="none" stroke="#111" strokeWidth="1.600" />
              </svg>
            )}
          </CheckWrap>
        </FieldRow>
      ))}
      <PaletteFoot>
        <PushButton>Finish Sketch</PushButton>
      </PaletteFoot>
    </Panel>
  );
};

const Quantity = () => (
  <ValueEditor>
    <ValueBox>
      <DotGrip />
      <ValueField>
        <ValueInput aria-label="Quantity" defaultValue="2" />
      </ValueField>
      <Spinner>
        <IconButton aria-label="Increase" $w={12} $h={11}>
          <svg width="5" height="3" viewBox="0 0 5 3"><path d="M0 3h5L2.500 0z" fill="#111" /></svg>
        </IconButton>
        <IconButton aria-label="Decrease" $w={12} $h={10}>
          <svg width="5" height="3" viewBox="0 0 5 3"><path d="M0 0h5L2.500 3z" fill="#111" /></svg>
        </IconButton>
      </Spinner>
    </ValueBox>
    <ModeButton aria-label="Rotation mode"><Rotate /><Caret /></ModeButton>
  </ValueEditor>
);

export default function App() {
  return (
    <Page>
      <GlobalStyle />
      <TopStrip><TopAccent /></TopStrip>
      <Body>
        <LeftStrip />
        <Main>
          <Viewport>
            <ModelScene />
            <Overlay>
              <OverlayTop>
                <Browser />
                <RightSide>
                  <ViewCube />
                  <PanelRow>
                    <CircularPattern />
                    <SketchPalette />
                  </PanelRow>
                </RightSide>
              </OverlayTop>
              <OverlayBottom>
                <Bar $open>
                  <PanelTitle>COMMENTS</PanelTitle>
                  <IconButton aria-label="Add comment"><RoundIcon plus /></IconButton>
                  <Grip $before={4} />
                </Bar>
                <NavBar>
                  <NavButton aria-label="Orbit" $gap={5} $after={6}><Orbit /><Caret /></NavButton>
                  <NavButton aria-label="Look at" $after={10}><LookAt /></NavButton>
                  <NavButton aria-label="Pan" $after={8}><Hand /></NavButton>
                  <NavButton aria-label="Zoom" $after={8}><ZoomIcon /></NavButton>
                  <NavButton aria-label="Fit" $gap={4} $after={6}><FitIcon /><Caret /></NavButton>
                  <NavButton aria-label="Display settings" $gap={1} $after={7}><Monitor /><Caret /></NavButton>
                  <NavButton aria-label="Grid and snaps" $gap={2} $after={7}><GridIcon /><Caret /></NavButton>
                  <NavButton aria-label="Viewports" $gap={2}><Panes /><Caret /></NavButton>
                </NavBar>
                <Status>Multiple selections</Status>
              </OverlayBottom>
            </Overlay>
            <Quantity />
          </Viewport>
          <Timeline>
            <Playback>
              {Object.entries(PLAY).map(([name, d]) => (
                <IconButton key={name} aria-label={name}>
                  <svg width="14" height="14" viewBox="0 0 14 14" fill="#3d3d3d" stroke="#3d3d3d" strokeWidth="1.400">
                    <path d={d} />
                  </svg>
                </IconButton>
              ))}
            </Playback>
            <Track>
              {FEATURES.map((kind, i) => (
                <Feature key={i} $edge={i === 0 ? "first" : i === FEATURES.length - 1 ? "last" : undefined}>
                  <FeatureIcon kind={kind} />
                </Feature>
              ))}
            </Track>
            <Marker width="12" height="32" viewBox="0 0 12 32">
              <path d="M0 0h12v4L7 9v23H5V9L0 4z" fill="#666" />
            </Marker>
            <Settings aria-label="Timeline settings"><Gear /></Settings>
          </Timeline>
        </Main>
      </Body>
      <Taskbar>
        <TaskSpacer $grow={537} />
        <TaskActive />
        <TaskSpacer $grow={793} />
        <Tray>
          <span>ENG</span>
          <span>2:15 PM</span>
        </Tray>
      </Taskbar>
    </Page>
  );
}
